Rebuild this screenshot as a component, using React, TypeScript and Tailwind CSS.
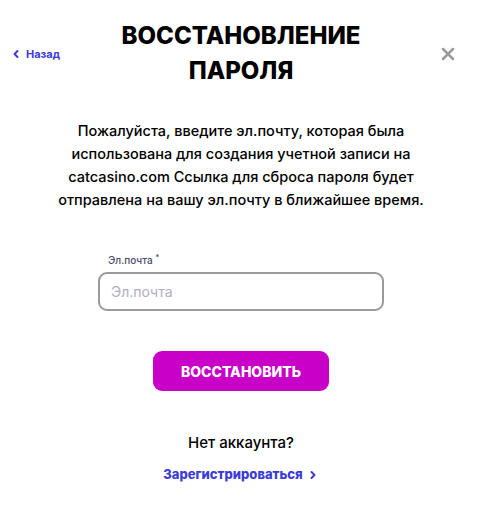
import { ChevronLeft, ChevronRight, X } from "lucide-react";

export default function App() {
  return (
    <div className="relative w-[482px] h-[506px] bg-white font-['Inter',sans-serif] text-black overflow-hidden">
      {/* шапка */}
      <div className="relative pt-[18px] px-[100px]">
        <h1 className="text-center text-[24px] leading-[35px] font-extrabold">
          ВОССТАНОВЛЕНИЕ
          <br />
          ПАРОЛЯ
        </h1>
        <button className="absolute left-[10px] top-[46px] flex items-center gap-[4px] text-[11px] font-bold text-[#3b3bd6]">
          <ChevronLeft size={12} strokeWidth={4} />
          Назад
        </button>
        <button className="absolute right-[24px] top-[44px] text-[#9a9a9a]">
          <X size={20} strokeWidth={3} />
        </button>
      </div>

      <p className="mt-[31px] mx-auto w-[380px] text-center text-[14.5px] leading-[23px] font-medium">
        Пожалуйста, введите эл.почту, которая была использована для создания учетной записи на catcasino.com Ссылка для сброса пароля будет отправлена на вашу эл.почту в ближайшее время.
      </p>

      <div className="mt-[42px] mx-auto w-[286px]">
        <label className="block pl-[10px] text-[10px] font-medium text-[#4a4a6a] leading-[14px]">
          Эл.почта <sup className="text-[8px]">*</sup>
        </label>
        <input
          className="mt-[5px] w-full h-[39px] rounded-[9px] border-2 border-[#9a9a9a] px-[11px] text-[14px] placeholder:text-[#b0b0c0] outline-none"
          placeholder="Эл.почта"
        />
      </div>

      <div className="mt-[40px] flex justify-center">
        <button className="w-[176px] h-[40px] rounded-[9px] bg-[#c800c8] text-white text-[14px] font-extrabold">
          ВОССТАНОВИТЬ
        </button>
      </div>

      <p className="mt-[41px] text-center text-[15px] font-medium leading-[22px]">Нет аккаунта?</p>
      <div className="mt-[11px] flex justify-center">
        <a className="flex items-center gap-[4px] text-[13px] font-extrabold text-[#3b3bd6]">
          Зарегистрироваться
          <ChevronRight size={12} strokeWidth={4} />
        </a>
      </div>
    </div>
  );
}
